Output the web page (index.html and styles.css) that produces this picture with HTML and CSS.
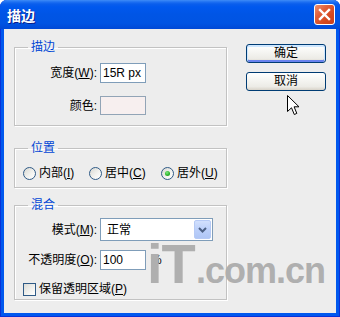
FILE: index.html
```html
<!DOCTYPE html>
<html lang="zh-CN">
<head>
<meta charset="utf-8">
<title>描边</title>
<link rel="stylesheet" href="styles.css">
</head>
<body>
<div class="window">
  <div class="titlebar">
    <span class="title">描边</span>
    <div class="close">
      <svg width="21" height="21" viewBox="0 0 21 21"><path d="M6 6 L15 15 M15 6 L6 15" stroke="#fff" stroke-width="2.4" stroke-linecap="square"/></svg>
    </div>
  </div>
  <div class="client">
    <div class="left">
      <fieldset class="group g1">
        <legend>描边</legend>
        <div class="form">
          <label>宽度(<u>W</u>):</label>
          <div class="textbox">15R px</div>
          <label>颜色:</label>
          <div class="swatch"></div>
        </div>
      </fieldset>
      <fieldset class="group g2">
        <legend>位置</legend>
        <div class="radios">
          <div class="opt"><span class="radio"></span><span>内部(<u>I</u>)</span></div>
          <div class="opt"><span class="radio"></span><span>居中(<u>C</u>)</span></div>
          <div class="opt"><span class="radio checked"></span><span>居外(<u>U</u>)</span></div>
        </div>
      </fieldset>
      <fieldset class="group g3">
        <legend>混合</legend>
        <div class="form">
          <label>模式(<u>M</u>):</label>
          <div class="select"><span class="sel-text">正常</span><span class="drop"><svg width="15" height="17" viewBox="0 0 15 17"><path d="M4 7 L7.5 10.5 L11 7" fill="none" stroke="#4D6185" stroke-width="2"/></svg></span></div>
          <label>不透明度(<u>O</u>):</label>
          <div class="with-unit"><div class="textbox">100</div><span>%</span></div>
        </div>
        <div class="opt check-row"><span class="checkbox"></span><span>保留透明区域(<u>P</u>)</span></div>
      </fieldset>
    </div>
    <div class="right">
      <div class="btn default">确定</div>
      <div class="btn">取消</div>
    </div>
  </div>
  <svg class="watermark" width="340" height="317" viewBox="0 0 340 317">
    <text x="147" y="283" class="wm-big">iT</text>
    <text x="196" y="283" class="wm-small">.com.cn</text>
  </svg>
  <svg class="cursor" width="13" height="21" viewBox="0 0 13 21"><path d="M0.5 0.5 L0.5 16.5 L4.5 12.8 L7.3 19.5 L9.8 18.4 L7.1 11.8 L12 11.8 Z" fill="#fff" stroke="#000" stroke-width="1" stroke-linejoin="miter"/></svg>
</div>
</body>
</html>
```

FILE: styles.css
```css
* { box-sizing: border-box; }
html, body { margin: 0; padding: 0; background: #ffffff; }
body {
  font-family: "Liberation Sans", "Noto Sans CJK SC", sans-serif;
  font-size: 12px;
  color: #000;
}
.window {
  position: relative;
  width: 340px;
  height: 317px;
  display: flex;
  flex-direction: column;
  background: #0058EE;
  border-radius: 7px 7px 0 0;
  box-shadow: inset 1px 0 0 #0831D9, inset -1px 0 0 #0831D9, inset 0 -1px 0 #0831D9;
  overflow: hidden;
}
.titlebar {
  flex: none;
  height: 29px;
  display: flex;
  align-items: center;
  justify-content: space-between;
  padding: 0 5px 0 7px;
  background: linear-gradient(to bottom, #3F8CF7 0px, #1E70F2 2px, #0A5EEC 4px, #0058EE 7px, #0055E5 50%, #0054E3 80%, #0049D6 100%);
}
.title {
  color: #fff;
  font-family: "Noto Sans CJK SC", sans-serif;
  font-weight: bold;
  font-size: 14px;
  line-height: 16px;
  text-shadow: 1px 1px 0 #0A1E8C;
  margin-top: 1px;
}
.close {
  width: 21px;
  height: 21px;
  border: 1px solid #fff;
  border-radius: 3px;
  background: linear-gradient(135deg, #F0916E 0%, #E2603A 35%, #D4481E 70%, #C8401C 100%);
  display: flex;
  align-items: center;
  justify-content: center;
}
.close svg { display: block; margin: -1px; }
.client {
  flex: 1;
  margin: 0 4px 4px 4px;
  background: #EDEDED;
  display: flex;
  align-items: flex-start;
  padding: 11px 0 0 10px;
}
.left {
  width: 213px;
  display: flex;
  flex-direction: column;
}
.group {
  margin: 0;
  padding: 0;
  min-width: 0;
  border: 1px solid #C2C2C2;
  box-shadow: 1px 1px 0 #FFFFFF, inset 1px 1px 0 #FFFFFF;
}
.group legend {
  margin-left: 13px;
  padding: 0 3px;
  color: #0046D5;
  font-size: 12px;
  line-height: 14px;
}
.g1 { padding-bottom: 10px; }
.g2 { margin-top: 15px; padding-bottom: 7px; }
.g3 { margin-top: 10px; padding-bottom: 3px; }
.form {
  display: grid;
  grid-template-columns: 82px auto;
  column-gap: 3px;
  align-items: center;
  justify-items: start;
}
.form label { justify-self: end; white-space: nowrap; line-height: 14px; }
.g1 .form { padding-top: 9px; row-gap: 13px; }
.g3 .form { padding-top: 6px; row-gap: 9px; }
.textbox {
  width: 46px;
  height: 20px;
  border: 1px solid #7F9DB9;
  background: #fff;
  padding-left: 2px;
  line-height: 18px;
  font-size: 12px;
  white-space: nowrap;
}
.swatch {
  width: 46px;
  height: 19px;
  border: 1px solid #92A4B6;
  background: #F7EFEF;
}
.select {
  width: 113px;
  height: 23px;
  border: 1px solid #7F9DB9;
  background: #fff;
  display: flex;
  align-items: center;
  padding: 1px 1px 1px 0;
}
.sel-text { flex: 1; padding-left: 6px; line-height: 14px; }
.drop {
  width: 17px;
  height: 19px;
  border: 1px solid #B6CAF5;
  border-radius: 2px;
  background: linear-gradient(to bottom, #D2E0FD 0%, #BCD0FA 50%, #AFC6F6 100%);
  display: flex;
  align-items: center;
  justify-content: center;
}
.drop svg { display: block; }
.with-unit { display: flex; align-items: center; gap: 5px; }
.radios {
  display: grid;
  grid-template-columns: 66px 72px auto;
  padding: 11px 0 0 8px;
}
.opt {
  display: flex;
  align-items: center;
  gap: 3px;
  line-height: 14px;
  white-space: nowrap;
}
.radio {
  position: relative;
  flex: none;
  width: 13px;
  height: 13px;
  border-radius: 50%;
  border: 1px solid #2F5A86;
  background: linear-gradient(135deg, #D8D8D2 0%, #F4F4F1 60%, #FFFFFF 100%);
}
.radio.checked::after {
  content: "";
  position: absolute;
  left: 3px;
  top: 3px;
  width: 5px;
  height: 5px;
  border-radius: 50%;
  background: radial-gradient(circle at 40% 35%, #7FEA7F 0%, #2DB42D 55%, #1A8A1A 100%);
}
.check-row { padding: 12px 0 0 8px; }
.checkbox {
  flex: none;
  width: 13px;
  height: 13px;
  border: 1px solid #2F5A86;
  background: linear-gradient(135deg, #DCDCD7 0%, #F6F6F4 70%, #FFFFFF 100%);
}
.right {
  margin-left: 19px;
  padding-top: 4px;
  display: flex;
  flex-direction: column;
  gap: 9px;
}
.btn {
  width: 80px;
  height: 19px;
  border: 1px solid #003C74;
  border-radius: 3px;
  background: linear-gradient(to bottom, #FFFFFF 0%, #F7F7F4 35%, #ECEBE6 80%, #D8D3C9 100%);
  text-align: center;
  line-height: 17px;
  font-size: 12px;
}
.btn.default {
  box-shadow: inset 0 1px 0 1px #CEE7FF, inset 0 -1px 0 1px #6982EE;
}
.watermark {
  position: absolute;
  left: 0;
  top: 0;
  pointer-events: none;
}
.watermark text {
  font-family: "Liberation Sans", "DejaVu Sans", sans-serif;
  font-weight: bold;
  fill: #AFAFAF;
}
.wm-big { font-size: 56px; letter-spacing: -1px; }
.wm-small { font-size: 36px; letter-spacing: -1px; }
.cursor {
  position: absolute;
  left: 287px;
  top: 95px;
}
```
